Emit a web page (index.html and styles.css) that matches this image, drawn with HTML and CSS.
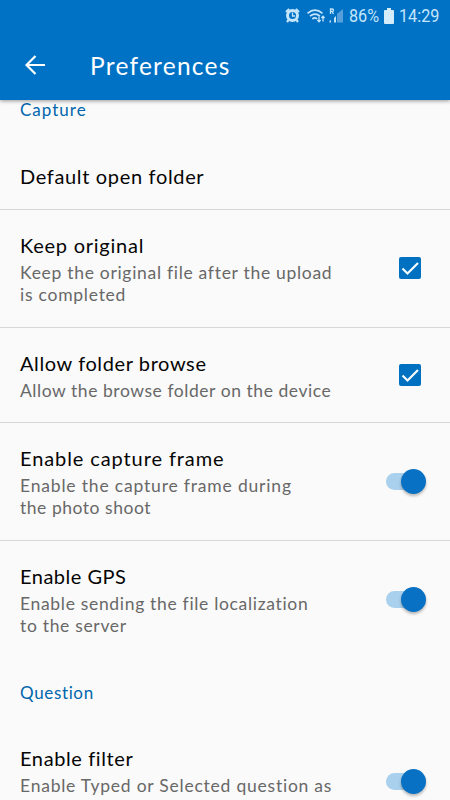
FILE: index.html
```
<!DOCTYPE html>
<html lang="en">
<head>
<meta charset="utf-8">
<title>Preferences</title>
<link rel="stylesheet" href="styles.css">
</head>
<body>
<div class="screen">
  <header class="app-header">
    <div class="status-bar">
      <svg class="status-icons" width="62" height="18" viewBox="0 0 62 18">
        <g fill="none" stroke="#c5e5fa">
          <circle cx="7.500" cy="8.500" r="5" fill="#0072c6" stroke-width="3"/>
          <path d="M1 5 4.200 2M14 5 10.800 2M3.500 13 2 15M11.500 13 13 15" stroke-width="2.200"/>
          <path d="M7.500 5.500v3.500H10" stroke-width="1.300"/>
          <path d="M22.500 6.300Q30 .1 37.500 6.300M25 9.200Q30 5 35 9.200M27.300 12Q30 9.900 32 12" stroke-width="1.700"/>
          <path d="M34 9.500v5M32.400 13 34 14.800 35.600 13M38 14.500v-5M36.400 11 38 9.200 39.600 11" stroke-width="1.300"/>
          <path d="M45.500 7V2h1.700q1.300 0 1.300 1.200t-1.300 1.200h-1.500M47 4.500 48.500 7" stroke-width="1.300"/>
        </g>
        <path d="M52 15.500V7l6-5v13.500z" fill="#579fdb"/>
        <path d="M44.500 15.500v-1.500l1.500-1v2.500zM49 15.500V11l2-2v6.500z" fill="#c5e5fa"/>
      </svg>
      <span class="battery-level">86%</span>
      <svg class="battery" width="10" height="16" viewBox="0 0 10 16"><path d="M3 0h4v2h2q1 0 1 1v12q0 1-1 1H1q-1 0-1-1V3q0-1 1-1h2z" fill="#d5edfb"/></svg>
      <span class="clock">14:29</span>
    </div>
    <div class="toolbar">
      <svg class="back" width="20" height="20" viewBox="0 0 20 20"><path d="M20 10H2M10.500 1 1.500 10l9 9" fill="none" stroke="#fff" stroke-width="2.200"/></svg>
      <h1>Preferences</h1>
    </div>
  </header>
  <main>
    <h2 class="section capture">Capture</h2>
    <section class="row plain"><h3 class="t1">Default open folder</h3></section>
    <section class="row tall">
      <div class="text"><h3 class="t2">Keep original</h3><p><span class="d1">Keep the original file after the upload</span><br><span class="d2">is completed</span></p></div>
      <svg class="check" width="24" height="24" viewBox="0 0 24 24"><rect x="1" y="1" width="22" height="22" rx="2" fill="#0070c0"/><path d="m4.500 12.500 5 5L20 7" fill="none" stroke="#f5fcff" stroke-width="2.200"/></svg>
    </section>
    <section class="row short">
      <div class="text"><h3 class="t3">Allow folder browse</h3><p><span class="d3">Allow the browse folder on the device</span></p></div>
      <svg class="check" width="24" height="24" viewBox="0 0 24 24"><rect x="1" y="1" width="22" height="22" rx="2" fill="#0070c0"/><path d="m4.500 12.500 5 5L20 7" fill="none" stroke="#f5fcff" stroke-width="2.200"/></svg>
    </section>
    <section class="row tall">
      <div class="text"><h3 class="t4">Enable capture frame</h3><p><span class="d4">Enable the capture frame during</span><br><span class="d5">the photo shoot</span></p></div>
      <div class="switch"><i class="thumb"></i></div>
    </section>
    <section class="row tall last">
      <div class="text"><h3 class="t5">Enable GPS</h3><p><span class="d6">Enable sending the file localization</span><br><span class="d7">to the server</span></p></div>
      <div class="switch"><i class="thumb"></i></div>
    </section>
    <h2 class="section question">Question</h2>
    <section class="row tall last">
      <div class="text"><h3 class="t6">Enable filter</h3><p><span class="d8">Enable Typed or Selected question as</span></p></div>
      <div class="switch"><i class="thumb"></i></div>
    </section>
  </main>
</div>
</body>
</html>
```
FILE: styles.css
```
* { box-sizing: border-box; margin: 0; padding: 0; }
body { font-family: Lato, sans-serif; background: #fafafa; }
.screen { width: 450px; height: 800px; overflow: hidden; }
.app-header { position: relative; height: 100px; background: #0072c6; box-shadow: 0 1px 4px rgba(0, 0, 0, .4); }
.status-bar { display: flex; height: 32px; padding-left: 285px; align-items: center; color: #c5e5fa; font: 18px/32px Roboto, sans-serif; }
.status-icons { flex: none; }
.battery-level { width: 32px; margin-left: 2px; }
.battery-level, .clock { transform: scaleX(.9); transform-origin: left; white-space: nowrap; }
.battery { flex: none; margin-left: 3px; }
.clock { margin-left: 5px; }
.toolbar { display: flex; height: 68px; padding: 0 0 0 25px; align-items: center; }
.back { margin-top: -2px; }
h1 { margin-left: 45px; color: #fff; font-size: 24.5px; font-weight: 400; line-height: 30px; letter-spacing: 1.25px; }
.section { padding-left: 20px; color: #0066ad; font-size: 17px; font-weight: 400; line-height: 22px; white-space: nowrap; }
.capture { height: 44px; line-height: 19px; letter-spacing: 1px; }
.question { height: 64px; padding-top: 23px; letter-spacing: .65px; }
.row { display: flex; padding: 23px 28px 0 20px; justify-content: space-between; border-bottom: 1px solid #d8d8d8; }
.plain { height: 66px; padding-top: 20px; }
.tall { height: 118px; }
.short { height: 95px; }
.last { border-bottom: 0; }
h3 { margin-top: -1px; color: #050505; font-size: 20px; font-weight: 400; line-height: 26px; letter-spacing: .6px; white-space: nowrap; }
p { margin-top: 4px; color: #686868; font-size: 17.500px; line-height: 22px; letter-spacing: .6px; white-space: nowrap; }
.t1 { letter-spacing: .66px; }
.t2 { letter-spacing: .75px; }
.t4 { letter-spacing: .9px; }
.t5 { letter-spacing: .5px; }
.d1 { letter-spacing: .7px; }
.d2 { letter-spacing: .75px; }
.d3 { letter-spacing: .55px; }
.d4 { letter-spacing: .82px; }
.d5 { letter-spacing: .53px; }
.d6 { letter-spacing: .68px; }
.d7 { letter-spacing: .68px; }
.d8 { letter-spacing: .77px; }
.check { flex: none; margin-top: 23px; }
.short .check { margin-top: 12px; }
.switch { flex: none; width: 36px; height: 17px; margin: 27px 0 0; border-radius: 9px; background: #a9d0ec; }
.thumb { display: block; width: 25px; height: 25px; margin: -4px 0 0 15px; border-radius: 50%; background: #0871c3; box-shadow: 0 2px 3px rgba(0, 0, 0, .28); }
```
